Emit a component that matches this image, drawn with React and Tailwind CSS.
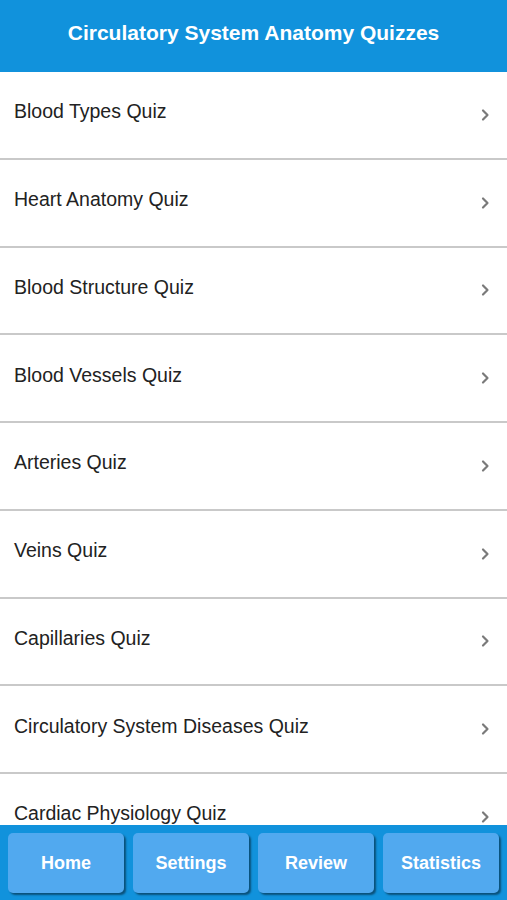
const quizzes = [
  "Blood Types Quiz",
  "Heart Anatomy Quiz",
  "Blood Structure Quiz",
  "Blood Vessels Quiz",
  "Arteries Quiz",
  "Veins Quiz",
  "Capillaries Quiz",
  "Circulatory System Diseases Quiz",
  "Cardiac Physiology Quiz",
];

const tabs = ["Home", "Settings", "Review", "Statistics"];

const Chevron = () => (
  <svg width="9" height="14" viewBox="0 0 9 14" className="text-[#7a7a7a]">
    <path
      d="M2 2.5 L6.5 7 L2 11.5"
      fill="none"
      stroke="currentColor"
      strokeWidth="2.2"
      strokeLinecap="round"
      strokeLinejoin="round"
    />
  </svg>
);

export default function App() {
  return (
    <div className="h-screen flex flex-col bg-white font-['Liberation_Sans',Arial,sans-serif] overflow-hidden">
      {/* Header */}
      <div className="h-[72px] shrink-0 bg-[#1192dc] flex items-center justify-center">
        <h1 className="text-white text-[21px] font-bold pb-[6px]">
          Circulatory System Anatomy Quizzes
        </h1>
      </div>

      {/* List */}
      <div className="flex-1 overflow-hidden">
        {quizzes.map((q) => (
          <div
            key={q}
            className="h-[87.75px] border-b-2 border-[#c9c9c9] flex items-center justify-between pl-[14px] pr-[17px]"
          >
            <span className="text-[19.5px] text-[#222] pb-[6px]">{q}</span>
            <Chevron />
          </div>
        ))}
      </div>

      {/* Bottom tabs */}
      <div className="h-[75px] shrink-0 bg-[#1192dc] grid grid-cols-4 gap-[9px] px-[8px] pt-[8px] pb-[7px]">
        {tabs.map((t) => (
          <button
            key={t}
            className="rounded-[5px] bg-[#51a9ef] text-white text-[18px] font-semibold shadow-[2px_2px_2px_rgba(0,0,0,0.45)]"
          >
            {t}
          </button>
        ))}
      </div>
    </div>
  );
}
